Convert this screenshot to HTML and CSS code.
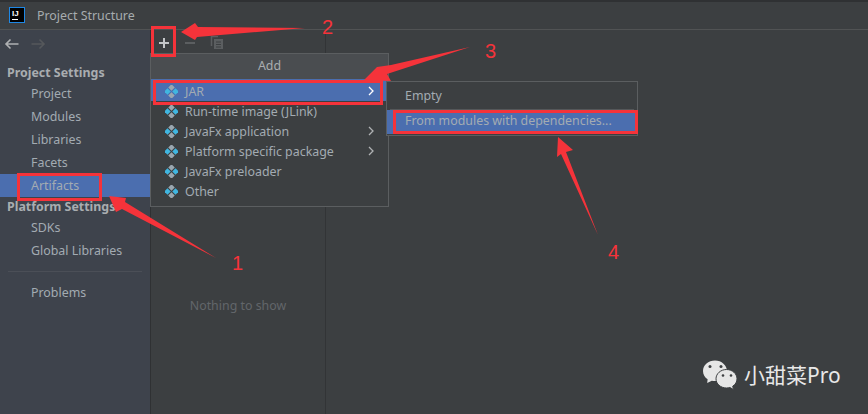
FILE: index.html
```html
<!DOCTYPE html>
<html lang="en">
<head>
<meta charset="utf-8">
<title>Project Structure</title>
<link rel="stylesheet" href="styles.css">
</head>
<body>
<svg width="0" height="0" class="defs"><defs>
<g id="pkg">
<rect x="4.2" y="0.2" width="4.6" height="4.6" transform="rotate(45 6.5 2.5)" fill="#9aa7b0"/>
<rect x="0.2" y="4.2" width="4.6" height="4.6" transform="rotate(45 2.5 6.5)" fill="#40b6e0"/>
<rect x="8.2" y="4.2" width="4.6" height="4.6" transform="rotate(45 10.5 6.5)" fill="#40b6e0"/>
<rect x="4.2" y="8.2" width="4.6" height="4.6" transform="rotate(45 6.5 10.5)" fill="#9aa7b0"/>
</g>
<path id="chev" d="M1 1l4 4-4 4" fill="none" stroke-width="1.3"/>
</defs></svg>
<div class="window">
  <header class="titlebar">
    <div class="logo"><span class="logo-text">IJ</span><span class="logo-bar"></span></div>
    <span class="title">Project Structure</span>
  </header>
  <div class="body">
    <nav class="sidebar">
      <div class="nav-arrows">
        <svg width="16" height="12" viewBox="0 0 16 12"><path d="M14.5 6H2M6.5 1.5L2 6l4.5 4.500" fill="none" stroke="#afb1b3" stroke-width="1.6"/></svg>
        <svg width="16" height="12" viewBox="0 0 16 12"><path d="M1.500 6H14M9.500 1.500L14 6l-4.500 4.500" fill="none" stroke="#55585b" stroke-width="1.6"/></svg>
      </div>
      <div class="nav-head nav-head-first">Project Settings</div>
      <div class="nav-item">Project</div>
      <div class="nav-item">Modules</div>
      <div class="nav-item">Libraries</div>
      <div class="nav-item">Facets</div>
      <div class="nav-item nav-selected">Artifacts</div>
      <div class="nav-head">Platform Settings</div>
      <div class="nav-item">SDKs</div>
      <div class="nav-item">Global Libraries</div>
      <div class="nav-sep"></div>
      <div class="nav-item">Problems</div>
    </nav>
    <section class="middle">
      <div class="toolbar">
        <svg width="12" height="12" viewBox="0 0 12 12"><path d="M6 1v10M1 6h10" stroke="#c4c6c8" stroke-width="2"/></svg>
        <svg width="12" height="12" viewBox="0 0 12 12"><path d="M1 6h10" stroke="#5b5e60" stroke-width="2"/></svg>
        <svg width="14" height="14" viewBox="0 0 14 14"><path d="M1.500 10V.5H8" fill="none" stroke="#5b5e60" stroke-width="1.500"/><rect x="4" y="3" width="9" height="10" fill="#5b5e60"/><path d="M6 6h5M6 8.500h5M6 11h5" stroke="#3c3f41"/></svg>
      </div>
      <div class="empty">Nothing to show</div>
    </section>
    <main class="content"></main>
  </div>

  <div class="menu menu-add">
    <div class="menu-title">Add</div>
    <div class="menu-row menu-row-active"><svg class="pkg" width="13" height="13"><use href="#pkg"/></svg><span class="menu-label">JAR</span><svg class="chev chev-on" width="7" height="10"><use href="#chev"/></svg></div>
    <div class="menu-row"><svg class="pkg" width="13" height="13"><use href="#pkg"/></svg><span class="menu-label">Run-time image (JLink)</span></div>
    <div class="menu-row"><svg class="pkg" width="13" height="13"><use href="#pkg"/></svg><span class="menu-label">JavaFx application</span><svg class="chev" width="7" height="10"><use href="#chev"/></svg></div>
    <div class="menu-row"><svg class="pkg" width="13" height="13"><use href="#pkg"/></svg><span class="menu-label">Platform specific package</span><svg class="chev" width="7" height="10"><use href="#chev"/></svg></div>
    <div class="menu-row"><svg class="pkg" width="13" height="13"><use href="#pkg"/></svg><span class="menu-label">JavaFx preloader</span></div>
    <div class="menu-row"><svg class="pkg" width="13" height="13"><use href="#pkg"/></svg><span class="menu-label">Other</span></div>
  </div>

  <div class="menu menu-sub">
    <div class="sub-row">Empty</div>
    <div class="sub-sep"></div>
    <div class="sub-row sub-row-active">From modules with dependencies...</div>
  </div>

  <svg class="arrows" width="868" height="414" viewBox="0 0 868 414">
    <g fill="#f5333a">
      <path d="M216 258L125 202 126 198 109 196 116 212 122 209z"/>
      <path d="M305 28L198 27 195 23 181 32 195 40 197 37z"/>
      <path d="M470 47L391 65 377 67 364 80 391 81 387 74z"/>
      <path d="M598 235L566 152 573 150 558 137 557 157 561 154z"/>
    </g>
    <g fill="none" stroke="#f5333a" stroke-width="3">
      <rect x="152.500" y="27.500" width="22" height="28"/>
      <rect x="154.500" y="81.500" width="227" height="22"/>
      <rect x="394.500" y="111.500" width="242" height="21"/>
      <rect x="18.500" y="174.500" width="82" height="25"/>
    </g>
  </svg>
  <span class="num num-1">1</span>
  <span class="num num-2">2</span>
  <span class="num num-3">3</span>
  <span class="num num-4">4</span>

  <div class="watermark">
    <svg width="34" height="30" viewBox="0 0 34 30">
      <path d="M12 .5C5.400.5 0 5.100 0 11c0 3.400 1.800 6.300 4.600 8.300L4.200 23l4.600-2.300c1 .2 2.100.4 3.200.4 6.600 0 12-4.600 12-10.100S18.600.5 12 .5z" fill="#e6e6e6"/>
      <path d="M23.500 9.500c-5.800 0-10.500 4.200-10.500 9.300s4.700 9.200 10.500 9.200c1.200 0 2.300-.2 3.400-.5l3.600 2-.8-3.300c2.800-1.700 4.300-4.400 4.300-7.400 0-5.100-4.700-9.300-10.500-9.300z" fill="#e6e6e6" stroke="#3c3f41" stroke-width="1"/>
      <circle cx="7" cy="6.500" r="1.500" fill="#3c3f41"/><circle cx="18" cy="6.500" r="1.500" fill="#3c3f41"/>
      <circle cx="20" cy="15.500" r="1.300" fill="#3c3f41"/><circle cx="28" cy="15.500" r="1.300" fill="#3c3f41"/>
    </svg>
    <span class="wm-text">小甜菜Pro</span>
  </div>
</div>
</body>
</html>
```
FILE: styles.css
```css
* { box-sizing: border-box; }
html, body { margin: 0; padding: 0; }
body { width: 868px; height: 414px; overflow: hidden; background: #3c3f41; font-family: "Noto Sans", "Noto Sans CJK SC", sans-serif; font-size: 12.4px; color: #a9b0b6; }
.defs { position: absolute; }
.window { position: relative; width: 868px; height: 414px; display: flex; flex-direction: column; }
.titlebar { height: 30px; flex: none; display: flex; align-items: center; gap: 12px; padding: 0 0 0 9px; background: #3c3f41; border-top: 2px solid #2f3133; border-bottom: 1px solid #515354; }
.logo { width: 16px; height: 16px; margin-top: -1px; background: #000; border: 1px solid #1e88e5; display: flex; flex-direction: column; align-items: flex-start; padding: 2px 0 0 2px; }
.logo-text { font: bold 8px/7px "Liberation Sans", sans-serif; color: #fff; }
.logo-bar { width: 6px; height: 1px; background: #fff; margin-top: 2px; }
.title { color: #a7acaf; }
.body { flex: 1; display: flex; min-height: 0; }
.sidebar { width: 151px; flex: none; background: #3e434c; border-right: 1px solid #2f3133; display: flex; flex-direction: column; }
.nav-arrows { height: 25px; display: flex; align-items: center; gap: 10px; padding: 2px 0 0 4px; }
.nav-head { height: 19px; padding-left: 7px; font-weight: 700; line-height: 19px; color: #a9adb0; }
.nav-head-first { height: 19px; margin-top: 8px; line-height: 19px; }
.nav-item { height: 23px; line-height: 23px; padding-left: 31px; color: #a3abb2; }
.nav-selected { background: #4b6eaf; }
.nav-sep { height: 1px; margin: 9px 8px; background: #4b4f57; }
.middle { width: 175px; flex: none; border-right: 1px solid #323436; position: relative; display: flex; flex-direction: column; background: #3c3f41; }
.toolbar { height: 25px; display: flex; align-items: center; gap: 14px; padding: 0 0 0 7px; }
.empty { position: absolute; left: 0; right: 0; top: 267px; text-align: center; color: #62666a; }
.content { flex: 1; background: #3c3f41; }
.menu { position: absolute; background: #3c3f41; border: 1px solid #5b5e60; }
.menu-add { left: 150px; top: 53px; width: 239px; height: 154px; }
.menu-title { height: 25px; line-height: 23px; text-align: center; background: #4a4d50; color: #a9adb0; }
.menu-row { height: 20px; display: flex; align-items: center; padding: 2px 13px 0 14px; color: #a3abb2; }
.menu-row-active { background: #4b6eaf; height: 22px; margin-bottom: -1px; }
.pkg { flex: none; margin-right: 7px; }
.menu-label { flex: 1; }
.chev { stroke: #afb1b3; }
.chev-on { stroke: #fff; }
.menu-sub { left: 386px; top: 81px; width: 252px; height: 55px; }
.sub-row { height: 27px; line-height: 28px; padding-left: 18px; color: #a3abb2; }
.sub-sep { height: 1px; margin: 0 3px; background: #55585a; }
.sub-row-active { height: 24px; line-height: 22px; background: #4b6eaf; }
.arrows { position: absolute; left: 0; top: 0; pointer-events: none; }
.num { position: absolute; color: #f5333a; font-size: 20px; line-height: 22px; font-family: "Liberation Sans", sans-serif; }
.num-1 { left: 232px; top: 252px; }
.num-2 { left: 322px; top: 16px; }
.num-3 { left: 485px; top: 40px; }
.num-4 { left: 608px; top: 241px; }
.watermark { position: absolute; left: 703px; top: 360px; display: flex; align-items: center; gap: 7px; }
.wm-text { color: #e8e8e8; font-size: 21px; line-height: 30px; }
```
